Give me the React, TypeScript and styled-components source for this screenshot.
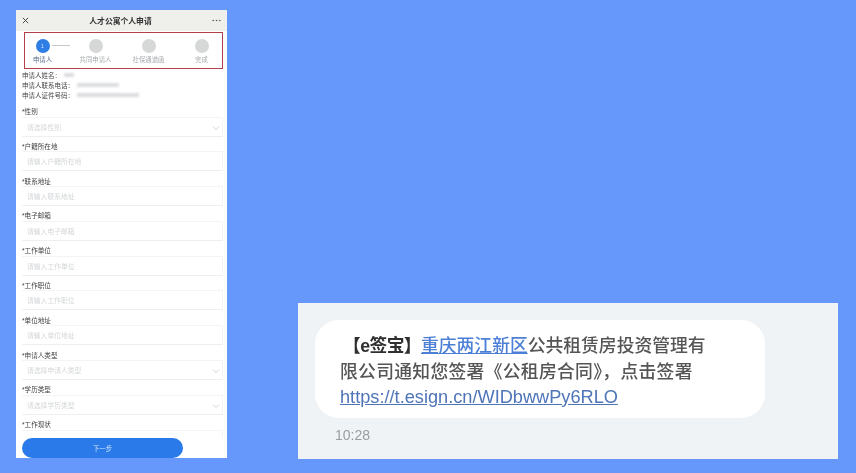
import React from "react";
import styled, { createGlobalStyle } from "styled-components";

const Global = createGlobalStyle`
  html, body { margin: 0; padding: 0; background: #6698fc; }
  body { font-family: "Liberation Sans", "Noto Sans CJK SC", sans-serif; }
`;

const Page = styled.main`
  width: 856px;
  height: 473px;
  box-sizing: border-box;
  padding: 10px 18px 14px 16px;
  display: flex;
  justify-content: space-between;
  align-items: flex-start;
  overflow: hidden;
  background: #6698fc;
`;

const Phone = styled.section`
  width: 211px;
  height: 448px;
  background: #fff;
  display: flex;
  flex-direction: column;
  overflow: hidden;
  filter: blur(0.6px);
`;

const Header = styled.header`
  height: 21px;
  flex: none;
  padding: 0 6px;
  background: #efefec;
  display: flex;
  align-items: center;
  justify-content: space-between;
  color: #333;
`;

const Title = styled.h1`
  margin: 0;
  font-size: 7.8px;
  font-weight: 700;
  color: #333;
`;

const Stepper = styled.div`
  flex: none;
  box-sizing: border-box;
  margin: 1px 4px 0 8px;
  height: 37px;
  border: 1.5px solid #b2404a;
  padding-right: 3px;
  display: grid;
  grid-template-columns: repeat(4, 53px);
  justify-content: center;
`;

const Step = styled.div`
  position: relative;
  display: flex;
  flex-direction: column;
  align-items: center;
  padding-top: 6px;
  gap: 2px;
`;

const Dot = styled.span<{ $active?: boolean }>`
  width: 14px;
  height: 14px;
  border-radius: 50%;
  background: ${(p) => (p.$active ? "#2f7ee6" : "#d6d8d8")};
  color: #dbe9fb;
  font-size: 5px;
  display: flex;
  align-items: center;
  justify-content: center;
`;

const Connector = styled.span`
  position: absolute;
  left: 36px;
  top: 12px;
  width: 18px;
  height: 1px;
  background: #c4c7ca;
`;

const StepLabel = styled.span<{ $active?: boolean }>`
  font-size: 6.4px;
  white-space: nowrap;
  color: ${(p) => (p.$active ? "#5a6f8a" : "#a9acae")};
`;

const Info = styled.div`
  flex: none;
  padding: 1px 0 0 6px;
  display: flex;
  flex-direction: column;
`;

const InfoRow = styled.div`
  height: 10px;
  display: flex;
  align-items: center;
  gap: 3px;
  font-size: 6.5px;
  color: #444;
`;

const Redacted = styled.span<{ $w: number }>`
  height: 4px;
  width: ${(p) => p.$w}px;
  background: #dcdde0;
  filter: blur(1px);
`;

const Form = styled.div`
  flex: 1;
  min-height: 0;
  padding: 5.5px 4px 0 6px;
  display: flex;
  flex-direction: column;
  overflow: hidden;
`;

const Field = styled.div`
  flex: none;
  height: 34.8px;
  display: flex;
  flex-direction: column;
`;

const Label = styled.label`
  height: 11px;
  display: flex;
  align-items: center;
  font-size: 6.6px;
  color: #3f3f3f;
`;

const InputBox = styled.div`
  position: relative;
  box-sizing: border-box;
  height: 20px;
  padding-left: 5px;
  display: flex;
  align-items: center;
  border-top: 1px solid #f3f4f4;
  border-bottom: 1.5px solid #eeefef;
  border-right: 1px solid #f5f5f5;
  font-size: 6.8px;
  color: #d4d6d8;
`;

const Chevron = styled.svg`
  position: absolute;
  right: 2px;
  top: 7px;
  width: 8px;
  height: 6px;
  fill: none;
  stroke: #d0d3d5;
  stroke-width: 1;
`;

const Footer = styled.div`
  flex: none;
  padding: 0 44px 0 6px;
`;

const NextButton = styled.button`
  width: 161px;
  height: 20px;
  display: block;
  border: 0;
  border-radius: 10px;
  background: #2a7be9;
  color: #cfe3fb;
  font: inherit;
  font-size: 6.4px;
`;

const SmsPanel = styled.section`
  width: 540px;
  height: 156px;
  margin-top: 293px;
  box-sizing: border-box;
  padding: 17px 0 0 17px;
  background: #f0f3f6;
  display: flex;
  flex-direction: column;
`;

const Bubble = styled.div`
  width: 450px;
  height: 98px;
  box-sizing: border-box;
  padding: 14px 0 0 25px;
  border-radius: 24px;
  background: #fff;
  font-size: 17.8px;
  font-weight: 500;
  line-height: 25.5px;
  color: #555;
`;

const SmsLine = styled.div`
  white-space: nowrap;
  filter: blur(0.6px);
`;

const SpacedLine = styled(SmsLine)`
  letter-spacing: 0.3px;
`;

const Bold = styled.span`
  padding-left: 3px;
  letter-spacing: -0.6px;
  font-weight: 700;
  color: #2f2f2f;
`;

const Place = styled.span`
  color: #4c7fd6;
  text-decoration: underline;
`;

const Url = styled.span`
  color: #4f75b8;
  font-weight: 400;
  text-decoration: underline;
  font-size: 18.2px;
`;

const Time = styled.div`
  margin: 9px 0 0 20px;
  font-size: 14px;
  line-height: 17px;
  color: #9a9da0;
  filter: blur(0.6px);
`;

const steps = ["申请人", "共同申请人", "社保通道函", "完成"];
const fields: [string, string, boolean?][] = [
  ["性别", "请选择性别", true],
  ["户籍所在地", "请输入户籍所在地"],
  ["联系地址", "请输入联系地址"],
  ["电子邮箱", "请输入电子邮箱"],
  ["工作单位", "请输入工作单位"],
  ["工作职位", "请输入工作职位"],
  ["单位地址", "请输入单位地址"],
  ["申请人类型", "请选择申请人类型", true],
  ["学历类型", "请选择学历类型", true],
  ["工作现状", ""],
];

export default function App() {
  return (
    <>
      <Global />
      <Page>
        <Phone>
          <Header>
            <svg width="7" height="7" viewBox="0 0 8 8" stroke="#444" strokeWidth="1.1">
              <path d="M1 1l6 6M7 1L1 7" />
            </svg>
            <Title>人才公寓个人申请</Title>
            <svg width="9" height="3" viewBox="0 0 9 3" fill="#555">
              <circle cx="1.2" cy="1.5" r=".8" />
              <circle cx="4.5" cy="1.5" r=".8" />
              <circle cx="7.8" cy="1.5" r=".8" />
            </svg>
          </Header>
          <Stepper>
            {steps.map((s, i) => (
              <Step key={s}>
                <Dot $active={i === 0}>{i === 0 ? "1" : ""}</Dot>
                {i === 0 && <Connector />}
                <StepLabel $active={i === 0}>{s}</StepLabel>
              </Step>
            ))}
          </Stepper>
          <Info>
            <InfoRow>申请人姓名：<Redacted $w={10} /></InfoRow>
            <InfoRow>申请人联系电话：<Redacted $w={42} /></InfoRow>
            <InfoRow>申请人证件号码：<Redacted $w={62} /></InfoRow>
          </Info>
          <Form>
            {fields.map(([label, ph, select]) => (
              <Field key={label}>
                <Label>*{label}</Label>
                <InputBox>
                  {ph}
                  {select && (
                    <Chevron viewBox="0 0 8 6">
                      <path d="M1 1.5l3 3 3-3" />
                    </Chevron>
                  )}
                </InputBox>
              </Field>
            ))}
          </Form>
          <Footer>
            <NextButton>下一步</NextButton>
          </Footer>
        </Phone>
        <SmsPanel>
          <Bubble>
            <SmsLine>
              <Bold>【e签宝】</Bold>
              <Place>重庆两江新区</Place>公共租赁房投资管理有
            </SmsLine>
            <SpacedLine>限公司通知您签署《公租房合同》，点击签署</SpacedLine>
            <SmsLine>
              <Url>https://t.esign.cn/WIDbwwPy6RLO</Url>
            </SmsLine>
          </Bubble>
          <Time>10:28</Time>
        </SmsPanel>
      </Page>
    </>
  );
}
